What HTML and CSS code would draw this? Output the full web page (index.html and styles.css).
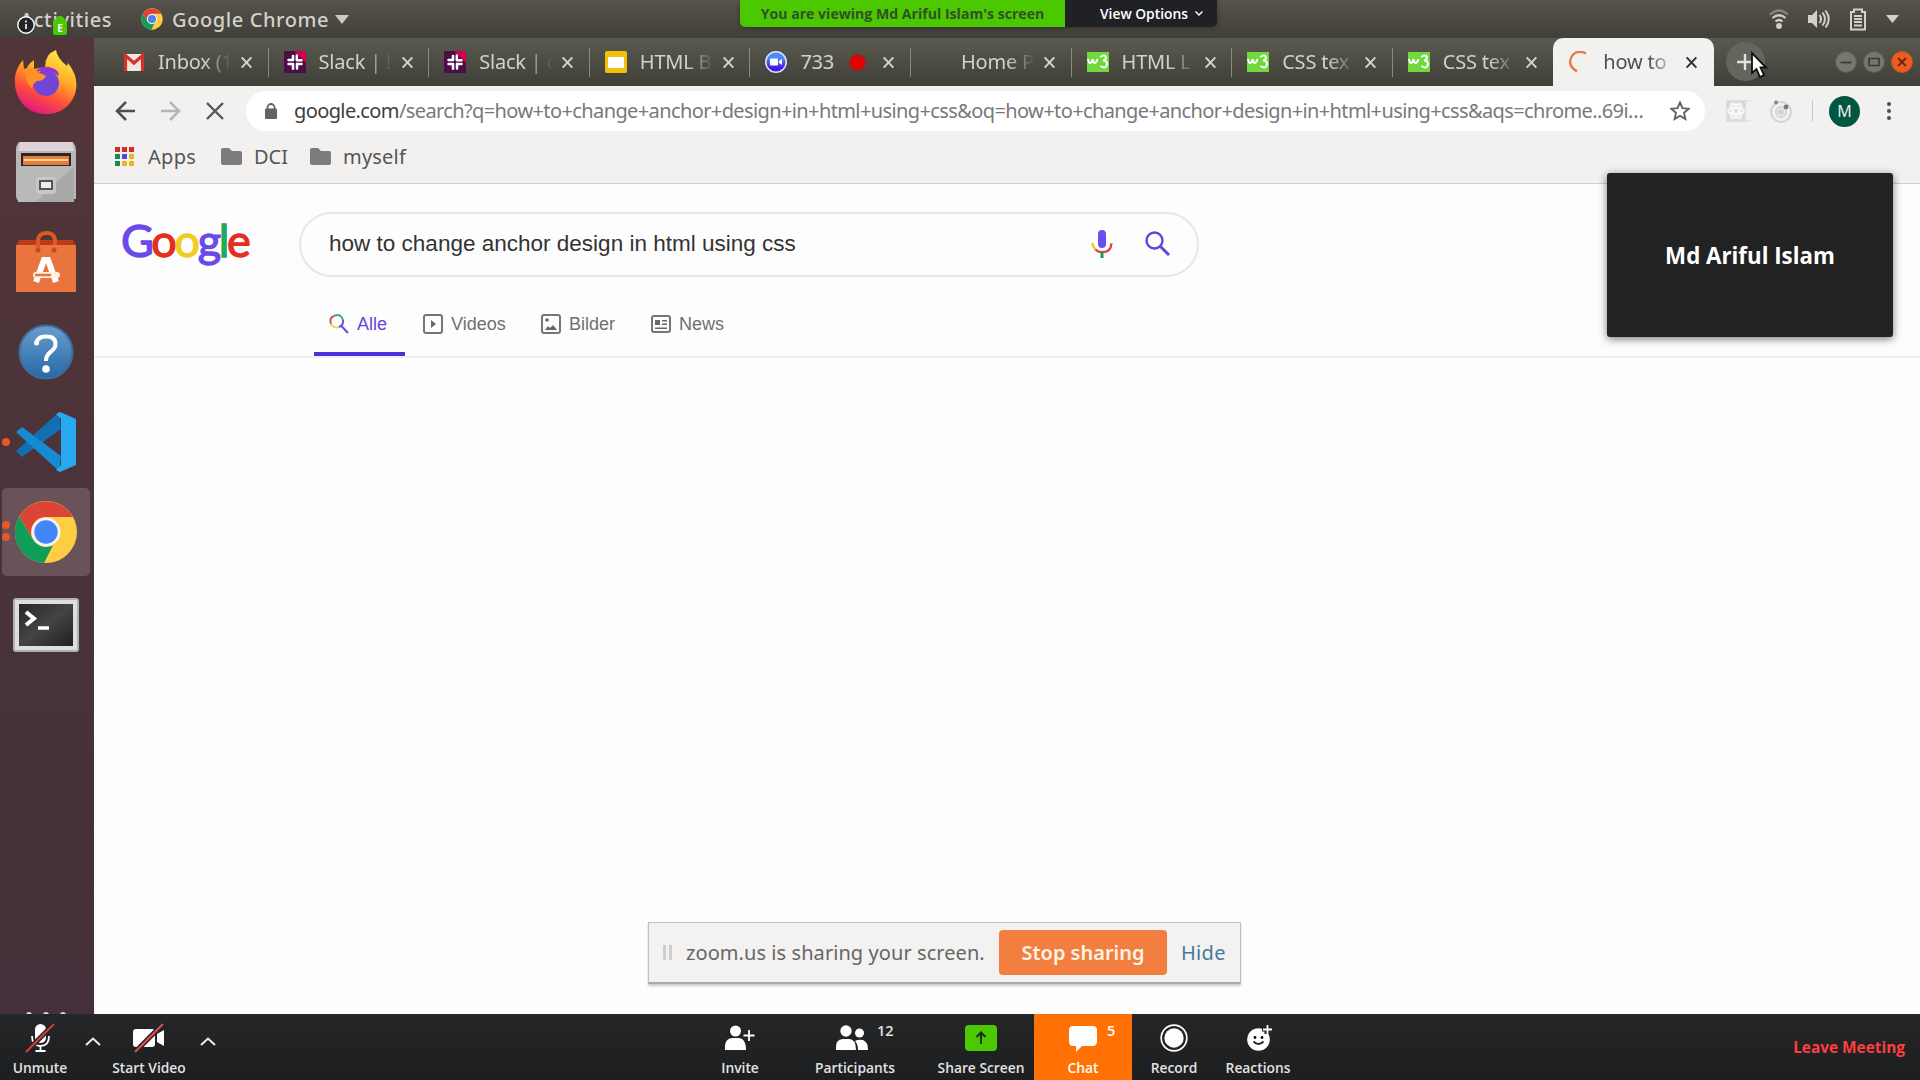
FILE: index.html
```html
<!DOCTYPE html>
<html lang="de">
<head>
<meta charset="utf-8">
<title>how to change anchor design in html using css</title>
<link rel="stylesheet" href="styles.css">
</head>
<body>
<svg class="defs" width="0" height="0" aria-hidden="true">
  <defs>
    <symbol id="close" viewBox="0 0 14 14"><path d="M1.8 1.5l10.4 11M12.200 1.500l-10.400 11" fill="none" stroke="currentColor" stroke-width="2.2"/></symbol>
    <symbol id="slack" viewBox="0 0 22 22"><path fill="#4b0f48" d="M0 0h22v22H0z"/><path fill="#d4004f" d="M10 0h12v12z"/><g stroke="#fff" stroke-width="2.500" stroke-linecap="round"><path d="M9 5v4M4.500 9h4.500M12.800 4.500v4.500M13 9.200h4.500M9 13.200v4.500M4.500 13h4.500M13 12.800v4.800M13 13h4.500"/></g></symbol>
    <symbol id="w3" viewBox="0 0 22 20"><path fill="#6fd93d" d="M0 0h22v20H0z"/><path d="M1 7q1 6 3.500 3 1-1 1-3 1 6 3.500 3 1-1 1.500-3M13 5q5-3 6 0 0 3-3 3.500 4 0 4 3.500-1 6-6.500 2" fill="none" stroke="#fff" stroke-width="2"/></symbol>
    <symbol id="folder" viewBox="0 0 21 17"><path fill="#7c7c7c" d="M2 0h6l3 3h8q2 0 2 2v10q0 2-2 2H2q-2 0-2-2V2q0-2 2-2z"/></symbol>
    <symbol id="chrome" viewBox="0 0 64 64">
      <circle cx="32" cy="32" r="31" fill="#ffcd42"/>
      <path d="M5.200 16.500A31 31 0 0 1 59 17H32a15 15 0 0 0-13 22.500z" fill="#db4437"/>
      <path d="M5.200 16.500L19 39.500a15 15 0 0 0 20 5.800L30 63A31 31 0 0 1 5.200 16.500z" fill="#0f9d58"/>
      <circle cx="32" cy="32" r="14.500" fill="#f3f3f3"/><circle cx="32" cy="32" r="11.700" fill="#4285f4"/>
    </symbol>
    <symbol id="caret" viewBox="0 0 16 9"><path d="M1 8l7-6.500L15 8" fill="none" stroke="#eee" stroke-width="2"/></symbol>
  </defs>
</svg>

<header class="topbar">
  <span class="activities">Activities</span>
  <svg class="app-icon" width="22" height="22"><use href="#chrome"/></svg>
  <span class="app-name">Google Chrome</span>
  <svg width="14" height="9"><path d="M0 0h14L7 9z" fill="#c9c8c3"/></svg>
  <div class="tray">
    <svg width="20" height="20" viewBox="0 0 20 20" fill="none" stroke="#d2d0cb" stroke-width="2.200"><path d="M1 5.500q9-8 18 0" stroke="#85837d"/><path d="M3.500 9q6.500-5.500 13 0M6.500 12.500q3.500-3 7 0"/><circle cx="10" cy="17" r="1.800" fill="#d2d0cb"/></svg>
    <svg width="22" height="20" viewBox="0 0 22 20" fill="none" stroke="#d2d0cb" stroke-width="2"><path d="M0 6h4l5-5v18l-5-5H0z" fill="#d2d0cb" stroke="none"/><path d="M11.500 6q3 4 0 8M14.500 3.500q5 6.500 0 13M17.500 1.500q6.500 8.500 0 17"/></svg>
    <svg width="18" height="23" viewBox="0 0 18 23" fill="none" stroke="#d2d0cb" stroke-width="2"><path d="M2 4h3V1.500h8V4h3v17.500H2z"/><path d="M5 8h8M5 11h8M5 14h8M5 17.500h8"/></svg>
    <svg width="13" height="8"><path d="M0 0h13L6.500 8z" fill="#d2d0cb"/></svg>
  </div>
</header>

<div class="desktop">
  <nav class="dock">
    <div class="dock-item firefox">
      <svg width="66" height="66" viewBox="0 0 66 66"><defs><linearGradient id="ff" x1=".8" y1="0" x2=".35" y2="1"><stop offset="0" stop-color="#fff34f"/><stop offset=".4" stop-color="#ffae27"/><stop offset=".7" stop-color="#ff5038"/><stop offset="1" stop-color="#e31587"/></linearGradient></defs><path fill="url(#ff)" d="M2 28q1-9 8-17l1 9 3-1q2-5 7-8l0 9 11-2q0-13 11-17 1 8 11 16l1-3q12 15 7 31-8 20-29 20T4 45Q1 37 2 28z"/><circle cx="33" cy="34" r="13" fill="#7345d6"/><path fill="#9b31c9" d="M22 23q7-8 17-4 7 2 7 8-10-8-24-4z"/><path fill="#ff9227" d="M12 20q6-3 13 3l8 4q-2 5-9 5-5 3-5 8-8-9-7-20z"/></svg>
    </div>
    <div class="dock-item">
      <svg width="60" height="63" viewBox="0 0 60 63"><path fill="#b9b6b8" d="M3 1h54q3 4 3 8v49h-3v3H3q-3-3-3-6V9q0-5 3-8z"/><path fill="#ddd3d8" d="M4 1h52l2 9H2z"/><path fill="#302522" d="M5 12h50v13H5z"/><path fill="#e77b39" d="M7 15h46v9H7z"/><path fill="#ffd6a0" d="M8 18h44v2H8z"/><path fill="#a9a9a9" d="M2 25h56v36H2z"/><path fill="#b9b9b9" d="M2 25h56L20 61H2z"/><rect x="20" y="36" width="20" height="17" rx="3" fill="#c7c7c7"/><rect x="24" y="40" width="12" height="8" fill="#eee" stroke="#555" stroke-width="2"/></svg>
    </div>
    <div class="dock-item">
      <svg width="60" height="62" viewBox="0 0 60 62"><path fill="#b93c17" d="M3 9h54l3 6H0z"/><path fill="#e9743d" d="M0 14h60v47H0z"/><path d="M22 19V9q1-7 9-7 7 0 8 7v5" fill="none" stroke="#e15720" stroke-width="4"/><circle cx="22" cy="19" r="2.500" fill="#c84b1c"/><circle cx="38" cy="19" r="2.500" fill="#c84b1c"/><path d="M20 51l8-22h4l8 22" fill="none" stroke="#fff" stroke-width="6"/><rect x="17" y="41" width="27" height="6" rx="3" fill="#fff0df"/><path d="M19 44h16" stroke="#e9743d" stroke-width="2.500"/></svg>
    </div>
    <div class="dock-item">
      <svg width="56" height="56" viewBox="0 0 56 56"><defs><linearGradient id="help" x2="0" y2="1"><stop stop-color="#6a9dcd"/><stop offset="1" stop-color="#2669a6"/></linearGradient></defs><circle cx="28" cy="28" r="26.500" fill="url(#help)" stroke="#3d6e9c" stroke-width="2"/><path d="M18.500 20q0-7.500 10-7.500 9 0 9 7.500 0 4.500-5 8-4.500 3.200-4.500 9" fill="none" stroke="#fff" stroke-width="4"/><circle cx="18.500" cy="19" r="2.500" fill="#fff"/><circle cx="28" cy="45" r="3.800" fill="#fff"/></svg>
    </div>
    <div class="dock-item">
      <i class="pip"></i>
      <svg width="60" height="60" viewBox="0 0 60 60"><path fill="#1070b3" d="M0 39l43-39 2 17L6 45z"/><path fill="#168bd2" d="M0 20l6-5 39 29-2 15z"/><path fill="#29a8f2" d="M44 0l16 7v46l-16 7-4-2 5-5V7l-5-5z"/></svg>
    </div>
    <div class="dock-item active">
      <i class="pip"></i><i class="pip"></i>
      <svg width="64" height="64"><use href="#chrome"/></svg>
    </div>
    <div class="dock-item terminal">
      <svg width="66" height="54" viewBox="0 0 66 54"><defs><linearGradient id="term" x2="1" y2="1"><stop stop-color="#272727"/><stop offset=".5" stop-color="#444"/><stop offset="1" stop-color="#202020"/></linearGradient></defs><rect x="1" y="1" width="64" height="52" rx="2" fill="#dedede" stroke="#b1b1b1" stroke-width="2"/><rect x="6" y="6" width="54" height="42" fill="url(#term)"/><path d="M13 14l8 6.500-8 6.500" fill="none" stroke="#fff" stroke-width="4"/><path d="M25 30h11" stroke="#fff" stroke-width="3.500"/></svg>
    </div>
    <div class="grid-dots"><i></i><i></i><i></i></div>
  </nav>

  <main class="browser">
    <div class="tabs">
      <div class="tab"><svg class="fav" viewBox="0 0 22 22"><path fill="#eee8e0" d="M1 3h20v17H1z"/><path d="M2.500 20V4.500L11 12l8.500-7.500V20" fill="none" stroke="#d5332a" stroke-width="3.200"/></svg><span class="title">Inbox (1</span><svg class="x"><use href="#close"/></svg></div>
      <div class="tab"><svg class="fav"><use href="#slack"/></svg><span class="title">Slack | !</span><svg class="x"><use href="#close"/></svg></div>
      <div class="tab"><svg class="fav"><use href="#slack"/></svg><span class="title">Slack | c</span><svg class="x"><use href="#close"/></svg></div>
      <div class="tab"><svg class="fav" viewBox="0 0 22 22"><rect width="22" height="22" rx="2" fill="#f4bf08"/><path fill="#fff" d="M3 6h16v11H3z"/></svg><span class="title">HTML B</span><svg class="x"><use href="#close"/></svg></div>
      <div class="tab"><svg class="fav" viewBox="0 0 22 22"><defs><linearGradient id="zm" x2="0" y2="1"><stop offset=".3" stop-color="#4a8cf7"/><stop offset=".8" stop-color="#4418e0"/></linearGradient></defs><circle cx="11" cy="11" r="10.200" fill="url(#zm)" stroke="#e2e5fb" stroke-width="1.500"/><rect x="5" y="7.500" width="8" height="7" rx="1" fill="#fff"/><path d="M14 10l3-2v6l-3-2z" fill="#fff"/></svg><span class="title rec">733</span><i class="rec-dot"></i><svg class="x"><use href="#close"/></svg></div>
      <div class="tab"><span class="fav"></span><span class="title">Home P</span><svg class="x"><use href="#close"/></svg></div>
      <div class="tab"><svg class="fav"><use href="#w3"/></svg><span class="title">HTML L</span><svg class="x"><use href="#close"/></svg></div>
      <div class="tab"><svg class="fav"><use href="#w3"/></svg><span class="title">CSS tex</span><svg class="x"><use href="#close"/></svg></div>
      <div class="tab last"><svg class="fav"><use href="#w3"/></svg><span class="title">CSS tex</span><svg class="x"><use href="#close"/></svg></div>
      <div class="tab current"><svg class="fav" viewBox="0 0 22 22"><path d="M18 2.500Q8-2 3.500 6T9 20.500" fill="none" stroke="#e77b42" stroke-width="2.400"/></svg><span class="title">how to</span><svg class="x"><use href="#close"/></svg></div>
      <div class="new-tab"><svg width="18" height="18"><path d="M9 1v16M1 9h16" stroke="#e2e1db" stroke-width="2.400"/></svg></div>
      <div class="window-buttons">
        <svg width="22" height="22" viewBox="0 0 22 22"><circle cx="11" cy="11" r="10.500" fill="#777771" stroke="#5a5a53"/><path d="M5.500 11.500h11" stroke="#3b3b36" stroke-width="1.700"/></svg>
        <svg width="22" height="22" viewBox="0 0 22 22"><circle cx="11" cy="11" r="10.500" fill="#777771" stroke="#5a5a53"/><path d="M6 7.500h10v7H6z" fill="none" stroke="#3b3b36" stroke-width="1.700"/></svg>
        <svg width="22" height="22" viewBox="0 0 22 22"><circle cx="11" cy="11" r="10.500" fill="#ee5b1d" stroke="#c65326"/><path d="M7 7l8 8M15 7l-8 8" stroke="#63280f" stroke-width="1.800"/></svg>
      </div>
    </div>

    <div class="toolbar">
      <svg class="back" width="21" height="20" viewBox="0 0 21 20"><path d="M20 10H2M11 1L2 10l9 9" fill="none" stroke="#4d4f51" stroke-width="2.500"/></svg>
      <svg class="forward" width="21" height="20" viewBox="0 0 21 20"><path d="M1 10h18M10 1l9 9-9 9" fill="none" stroke="#b6b6b6" stroke-width="2.500"/></svg>
      <svg class="stop" width="18" height="18" viewBox="0 0 18 18"><path d="M1 1l16 16M17 1L1 17" stroke="#55575a" stroke-width="2.400"/></svg>
      <div class="omnibox">
        <svg width="12" height="16" viewBox="0 0 12 16"><rect y="5.500" width="12" height="10.500" rx="1" fill="#606367"/><path d="M2.500 6V4.500a3.500 3.500 0 0 1 7 0V6" fill="none" stroke="#606367" stroke-width="1.800"/></svg>
        <span class="url"><b>google.com</b>/search?q=how+to+change+anchor+design+in+html+using+css&amp;oq=how+to+change+anchor+design+in+html+using+css&amp;aqs=chrome..69i…</span>
        <svg class="star" width="20" height="20" viewBox="0 0 20 20"><path d="M10 1.500l2.500 5.700 6.200.6-4.700 4.100 1.400 6.100L10 14.800 4.600 18 6 11.900 1.300 7.800l6.200-.6z" fill="none" stroke="#5f6266" stroke-width="1.900"/></svg>
      </div>
      <svg class="ext" width="26" height="22" viewBox="0 0 26 22"><path d="M0 0h20v22H0z" fill="#dcdcdc"/><g fill="none" stroke="#f8f8f8" stroke-width="2"><ellipse cx="10" cy="11" rx="8" ry="3"/><ellipse cx="10" cy="11" rx="8" ry="3" transform="rotate(60 10 11)"/><ellipse cx="10" cy="11" rx="8" ry="3" transform="rotate(120 10 11)"/></g><path d="M20 1h6M20 21h6" stroke="#dedede"/></svg>
      <svg class="ext2" width="24" height="24" viewBox="0 0 24 24" fill="none" stroke="#d4d4d4" stroke-width="2"><circle cx="12" cy="13" r="10"/><circle cx="12" cy="13" r="5"/><circle cx="12" cy="13" r="2" fill="#d4d4d4"/><circle cx="7" cy="3.500" r="2" fill="#85868a" stroke="none"/><circle cx="17" cy="8" r="2.400" fill="#77787d" stroke="none"/></svg>
      <i class="divider"></i>
      <span class="avatar">M</span>
      <span class="menu"><i></i><i></i><i></i></span>
    </div>

    <div class="bookmarks">
      <svg width="19" height="19" viewBox="0 0 19 19"><path fill="#d92a2b" d="M0 0h5v5H0zM7 0h5v5H7zM14 0h5v5h-5z"/><path fill="#158a52" d="M0 7h5v5H0zM0 14h5v5H0z"/><path fill="#5545e2" d="M7 7h5v5H7z"/><path fill="#e9b523" d="M14 7h5v5h-5zM7 14h5v5H7zM14 14h5v5h-5z"/></svg>
      <span class="apps">Apps</span>
      <svg width="21" height="17"><use href="#folder"/></svg><span class="dci">DCI</span>
      <svg width="21" height="17"><use href="#folder"/></svg><span class="my">myself</span>
    </div>

    <section class="page">
      <div class="search-row">
        <div class="logo"><span class="b">G</span><span class="r">o</span><span class="y">o</span><span class="b">g</span><span class="g">l</span><span class="r">e</span></div>
        <div class="search">
          <span class="query">how to change anchor design in html using css</span>
          <svg width="22" height="30" viewBox="0 0 22 30"><rect x="7" y="1" width="8" height="18" rx="4" fill="#6a4cf0"/><path d="M1.500 14q0 4 3 6.500" fill="none" stroke="#efc32c" stroke-width="2.300"/><path d="M4.500 20.500q2.500 2.700 6.500 2.700 9 0 9.500-9" fill="none" stroke="#d64444" stroke-width="2.300"/><path d="M11 23v6" stroke="#24934d" stroke-width="3"/></svg>
          <svg class="mag" width="25" height="25" viewBox="0 0 25 25"><circle cx="9.500" cy="9.500" r="8" fill="none" stroke="#5f46dd" stroke-width="2.400"/><path d="M15 15l9 9" stroke="#5f46dd" stroke-width="3"/></svg>
        </div>
      </div>
      <div class="filters">
        <span class="filter on"><svg width="20" height="20" viewBox="0 0 20 20" fill="none" stroke-width="2"><path d="M2 10Q0 4 5 2" stroke="#d95757"/><path d="M5 2q7-3 9 4" stroke="#3cae80"/><path d="M2 10q3 5 8 3" stroke="#f0d45b"/><path d="M10 13q5-2 4-7M12 11.500l7 7.500" stroke="#6a4cdd"/></svg><span class="alle">Alle</span></span>
        <span class="filter"><svg width="20" height="20" viewBox="0 0 20 20"><rect x="1" y="1" width="18" height="18" rx="2" fill="none" stroke="#74777a" stroke-width="2"/><path d="M8 6l5 4-5 4z" fill="#66696c"/></svg><span class="videos">Videos</span></span>
        <span class="filter"><svg width="20" height="20" viewBox="0 0 20 20"><rect x="1" y="1" width="18" height="18" rx="2" fill="none" stroke="#74777a" stroke-width="2"/><circle cx="6" cy="6" r="1.800" fill="#66696c"/><path d="M4 16l3-4 2 2 3-3 4 5z" fill="#66696c"/></svg><span class="bilder">Bilder</span></span>
        <span class="filter"><svg width="20" height="18" viewBox="0 0 20 18"><rect x="1" y="1" width="18" height="16" rx="2" fill="none" stroke="#74777a" stroke-width="2"/><path d="M4 5h5v5H4zM11 5h5v1.500h-5zM11 8.500h5V10h-5zM4 12.500h12V14H4z" fill="#66696c"/></svg><span class="news">News</span></span>
      </div>
    </section>
  </main>
</div>

<footer class="meeting">
  <div class="ctl unmute"><svg width="30" height="30" viewBox="0 0 30 30"><rect x="10" y="1" width="11" height="19" rx="5.500" fill="#fff"/><path d="M7 13q0 10 8.500 10T24 13M15.500 23v5M10.500 28h10" fill="none" stroke="#fff" stroke-width="1.800"/><path d="M1 29L29 1" stroke="#242527" stroke-width="5"/><path d="M1 29L29 1" stroke="#e0393c" stroke-width="1.800"/></svg><span>Unmute</span></div>
  <svg class="caret c1" width="16" height="9"><use href="#caret"/></svg>
  <div class="ctl video"><svg width="32" height="30" viewBox="0 0 32 30"><rect x="0" y="6" width="22" height="18" rx="3" fill="#fff"/><path d="M24 11l7-4v16l-7-4z" fill="#fff"/><path d="M2 29L30 1" stroke="#242527" stroke-width="5"/><path d="M2 29L30 1" stroke="#ef4b50" stroke-width="1.800"/></svg><span>Start Video</span></div>
  <svg class="caret c2" width="16" height="9"><use href="#caret"/></svg>
  <div class="ctl invite"><svg width="32" height="26" viewBox="0 0 32 26" fill="#fff"><circle cx="11.500" cy="6" r="5.500"/><path d="M1 25q-1-12 8-12h5q8 0 8 12z"/><path d="M25 5v11M19.500 10.500h11" stroke="#fff" stroke-width="1.800"/></svg><span>Invite</span></div>
  <div class="ctl people"><svg width="34" height="26" viewBox="0 0 34 26" fill="#fff"><circle cx="11" cy="6" r="5.700"/><circle cx="24.500" cy="8" r="4.500"/><path d="M1 25q-1-11 7-11h6q7 0 7 11zM23 25q0-6-3-9 3-2 8-1 5 2 5 10z"/></svg><b>12</b><span>Participants</span></div>
  <div class="ctl share"><svg width="32" height="26" viewBox="0 0 32 26"><rect width="32" height="26" rx="4" fill="#4cc900"/><path d="M16 19V8M11.500 12L16 7.500l4.500 4.500" fill="none" stroke="#203016" stroke-width="2"/></svg><span>Share Screen</span></div>
  <div class="ctl chat"><svg width="28" height="26" viewBox="0 0 28 26"><path d="M4 0h20q4 0 4 4v11q0 5-4 5H13l-6 6v-6H4q-4 0-4-5V4q0-4 4-4z" fill="#fff"/></svg><b>5</b><span>Chat</span></div>
  <div class="ctl record"><svg width="28" height="28" viewBox="0 0 28 28"><circle cx="14" cy="14" r="12.800" fill="none" stroke="#fff" stroke-width="1.700"/><circle cx="14" cy="14" r="9.700" fill="#fff"/></svg><span>Record</span></div>
  <div class="ctl react"><svg width="26" height="28" viewBox="0 0 26 28"><circle cx="11.500" cy="15.500" r="11.300" fill="#fff"/><path d="M20 0v10M15 5h10" stroke="#242527" stroke-width="5"/><path d="M20.500 1v9M16 5.500h9" stroke="#fff" stroke-width="1.800"/><circle cx="8" cy="13.500" r="1.400"/><circle cx="15" cy="13.500" r="1.400"/><path d="M6.500 17.500q5 5 10 0" fill="none" stroke="#222" stroke-width="1.800"/></svg><span>Reactions</span></div>
  <span class="leave">Leave Meeting</span>
</footer>

<div class="viewing"><span class="who"><span>You are viewing Md Ariful Islam's screen</span></span><span class="options"><span>View Options</span> <svg width="8" height="5"><path d="M.5.5L4 4 7.500.5" fill="none" stroke="#fff" stroke-width="1.400"/></svg></span></div>
<svg class="info" width="18" height="18" viewBox="0 0 18 18"><circle cx="9" cy="9" r="8.200" fill="#222329" stroke="#fff" stroke-width="1.400"/><path d="M9 8v5M9 4.500v2" stroke="#fff" stroke-width="1.600"/></svg>
<div class="encrypted">E</div>
<div class="speaker"><span>Md Ariful Islam</span></div>
<div class="sharing"><i class="grip"></i><span class="msg">zoom.us is sharing your screen.</span><span class="halt"><span>Stop sharing</span></span><span class="hide">Hide</span></div>
<svg class="pointer" width="18" height="28" viewBox="0 0 18 28"><path d="M2 2v20l4.500-4 3.500 8 4-2-3.500-7.500H16z" fill="#fff" stroke="#111" stroke-width="1.800"/></svg>
</body>
</html>
```

FILE: styles.css
```css
* { box-sizing: border-box; }
body { margin: 0; width: 1920px; height: 1080px; overflow: hidden; background: #fdfdfd; font-family: "Noto Sans", "Open Sans", sans-serif; display: flex; flex-direction: column; white-space: nowrap; position: relative; }
svg { display: block; flex: none; }
.defs { position: absolute; }

.topbar { height: 38px; flex: none; display: flex; align-items: center; padding: 0 21px 0 20px; background: linear-gradient(#57534c, #403f39); color: #d3d1cb; font-size: 20px; font-weight: 500; }
.activities { width: 121px; letter-spacing: .6px; }
.app-icon { margin-right: 9px; }
.app-name { width: 163px; letter-spacing: .6px; }
.tray { margin-left: auto; display: flex; align-items: center; gap: 19px; }

.desktop { height: 976px; display: flex; }
.dock { width: 94px; flex: none; background: linear-gradient(#523539, #4a3339 50%, #44303a); display: flex; flex-direction: column; }
.dock-item { height: 88px; width: 88px; flex: none; margin: 0 0 2px 2px; display: flex; align-items: center; justify-content: center; position: relative; border-radius: 5px; }
.dock-item.active { background: #695359; }
.dock-item.terminal { padding-top: 5px; }
.pip { position: absolute; left: 0; top: 40px; width: 8px; height: 8px; border-radius: 50%; background: #e35a2a; }
.active .pip { top: 33px; }
.active .pip + .pip { top: 45px; }
.grid-dots { margin-top: auto; height: 2px; display: flex; gap: 11px; padding-left: 26px; overflow: hidden; }
.grid-dots i { width: 6px; height: 6px; border-radius: 3px; background: #d9d5d6; }

.browser { flex: 1; min-width: 0; }
.tabs { height: 48px; display: flex; background: linear-gradient(#5a5a4f, #3f3f39); padding-left: 14px; }
.tab { width: 160.600px; flex: none; display: flex; align-items: center; padding-left: 15px; color: #d3d2ca; position: relative; }
.tab::after { content: ""; position: absolute; right: 0; top: 10px; width: 1px; height: 29px; background: #8b8a82; }
.tab.last::after, .tab.current::after { display: none; }
.fav { width: 22px; height: 22px; margin-right: 13px; flex: none; }
.title { width: 74px; padding-bottom: 2px; font-size: 20px; letter-spacing: -.2px; -webkit-mask-image: linear-gradient(90deg, #000 46px, #0001 72px); mask-image: linear-gradient(90deg, #000 46px, #0001 72px); }
.title.rec { width: 49px; -webkit-mask-image: none; mask-image: none; }
.rec-dot { width: 17px; height: 17px; margin-right: 8px; border-radius: 50%; background: #df0303; border: 1px solid #932721; }
.x { width: 13px; height: 13px; margin-left: 8px; flex: none; }
.tab.current { background: #f2f1f0; color: #4e4e4e; border-radius: 10px 10px 0 0; }
.tab.current .x { color: #333; }
.new-tab { width: 39px; height: 39px; margin: 4px 0 0 12px; border-radius: 50%; background: #66655d; display: flex; align-items: center; justify-content: center; }
.window-buttons { margin-left: auto; display: flex; gap: 6px; align-items: center; padding-right: 7px; }

.toolbar { height: 50px; background: #f2f1f0; display: flex; align-items: center; padding-left: 21px; }
.forward { margin-left: 24px; }
.stop { margin-left: 25px; }
.omnibox { width: 1459px; height: 40px; margin-left: 22px; flex: none; border-radius: 20px; background: #fff; display: flex; align-items: center; padding-left: 19px; }
.url { width: 1376px; margin-left: 17px; padding-bottom: 2px; flex: none; font-size: 20px; color: #77797b; letter-spacing: -.61px; }
.url b { font-weight: 400; color: #3c3e40; }
.ext { margin-left: 21px; }
.ext2 { margin-left: 17px; }
.divider { width: 1px; height: 22px; margin-left: 19px; background: #c8c8c8; }
.avatar { width: 31px; height: 31px; margin-left: 16px; border-radius: 50%; background: #00563f; color: #e8f0ed; font-size: 16px; display: flex; align-items: center; justify-content: center; }
.menu { margin-left: 27px; display: flex; flex-direction: column; gap: 3px; }
.menu i { width: 4px; height: 4px; border-radius: 2px; background: #4d4f52; }
.bookmarks { height: 48px; background: #f2f1f0; border-bottom: 1px solid #d2d1d0; display: flex; align-items: center; padding: 0 0 6px 21px; color: #555; font-size: 20px; }
.apps { width: 73px; margin-left: 14px; letter-spacing: .3px; }
.dci { width: 56px; margin-left: 12px; }
.my { margin-left: 12px; letter-spacing: .2px; }

.page { height: 174px; border-bottom: 2px solid #efeff1; font-family: "Liberation Sans", Arial, sans-serif; }
.search-row { display: flex; padding-top: 28px; }
.logo { width: 205px; height: 64px; padding-left: 27px; font: 45px/56px Lato, sans-serif; letter-spacing: -2.300px; -webkit-text-stroke: 1.300px currentColor; }
.logo .b { color: #6a4bea; } .logo .r { color: #e52d20; } .logo .y { color: #f2cd1e; } .logo .g { color: #25a85b; }
.search { width: 900px; height: 65px; border: 2px solid #e6e7e9; border-radius: 33px; display: flex; align-items: center; padding: 0 0 2px 28px; }
.query { width: 762px; font-size: 22.530px; color: #333; }
.mag { margin-left: 32px; }
.filters { display: flex; height: 79px; padding-left: 220px; }
.filter { width: 118px; display: flex; height: 79px; padding-top: 15px; align-items: center; font-size: 18px; color: #6d7073; }
.filter svg { margin-right: 8px; }
.filter:nth-child(3) { width: 110px; }
.filter.on { width: 91px; padding: 19px 0 0 15px; margin-right: 18px; border-bottom: 4px solid #5030d9; color: #6445dc; }

.meeting { height: 66px; flex: none; display: flex; background: linear-gradient(#252628, #1d1e20); color: #e2e2e2; font: 600 13.800px "Open Sans", sans-serif; }
.ctl { display: flex; flex-direction: column; align-items: center; position: relative; padding-top: 9px; }
.ctl svg { height: 30px; }
.ctl span { line-height: 20px; margin-top: 5px; }
.ctl b { position: absolute; top: 8px; font-weight: 600; font-size: 14.500px; line-height: 18px; }
.unmute { width: 80px; }
.caret { margin-top: 23px; }
.c1 { margin-left: 5px; }
.video { width: 78px; margin-left: 9px; }
.c2 { margin-left: 12px; }
.invite { width: 80px; margin-left: 484px; }
.invite svg, .people svg, .share svg { height: 26px; margin: 2px 0; }
.people { width: 90px; margin-left: 30px; }
.people svg { transform: translateX(-3px); }
.people b { left: 67px; }
.share { width: 100px; margin-left: 31px; }
.chat { width: 98px; margin-left: 3px; background: #ff7104; color: #fff; }
.chat svg { height: 26px; margin: 3px 0 1px; }
.chat b { left: 73px; }
.record { width: 84px; }
.react { width: 84px; }
.react svg { transform: translateX(2px); }
.leave { margin-left: auto; margin-right: 15px; line-height: 68px; color: #ff3e3e; font-weight: 700; font-size: 15.400px; }

.viewing { position: absolute; top: 0; left: 740px; width: 477px; height: 27px; display: flex; font: 600 13.800px/28px "Open Sans", sans-serif; border-radius: 0 0 5px 5px; overflow: hidden; box-shadow: 0 1px 4px #2228; }
.who { width: 325px; background: #4bc800; color: #32502a; text-align: center; font-weight: 700; font-size: 14.100px; }
.options { flex: 1; display: flex; align-items: center; gap: 7px; padding-left: 35px; background: #202124; color: #fff; }
.info { position: absolute; left: 17px; top: 16px; }
.encrypted { position: absolute; left: 53px; top: 20px; width: 14px; height: 15px; background: #4bc800; border-radius: 2px; color: #fff; font: 700 10px/16px "Open Sans", sans-serif; text-align: center; }
.encrypted::before { content: ""; position: absolute; left: 2px; top: -4px; width: 10px; height: 5px; background: #4bc800; border-radius: 5px 5px 0 0; }
.speaker { position: absolute; left: 1607px; top: 173px; width: 286px; height: 164px; border-radius: 3px; background: #222; color: #fff; box-shadow: 0 2px 9px #0008; display: flex; align-items: center; justify-content: center; font: 700 22.300px "Open Sans", sans-serif; }
.sharing { position: absolute; left: 648px; top: 922px; width: 593px; height: 62px; border: 1px solid #c1c1c3; border-bottom: 2px solid #aaa; box-shadow: 0 2px 2px #0003; background: #f3f2f1; display: flex; align-items: center; color: #666; font-size: 20px; }
.grip { width: 9px; height: 15px; margin: 0 14px; border: solid #cdcdd2; border-width: 0 3px; }
.msg { width: 313px; letter-spacing: .07px; }
.halt { width: 168px; height: 45px; border-radius: 4px; background: #f27f3f; color: #fff3e6; font-weight: 600; display: flex; align-items: center; justify-content: center; }
.hide { margin-left: 14px; color: #417b9c; letter-spacing: .3px; }
.pointer { position: absolute; left: 1750px; top: 51px; }
```
